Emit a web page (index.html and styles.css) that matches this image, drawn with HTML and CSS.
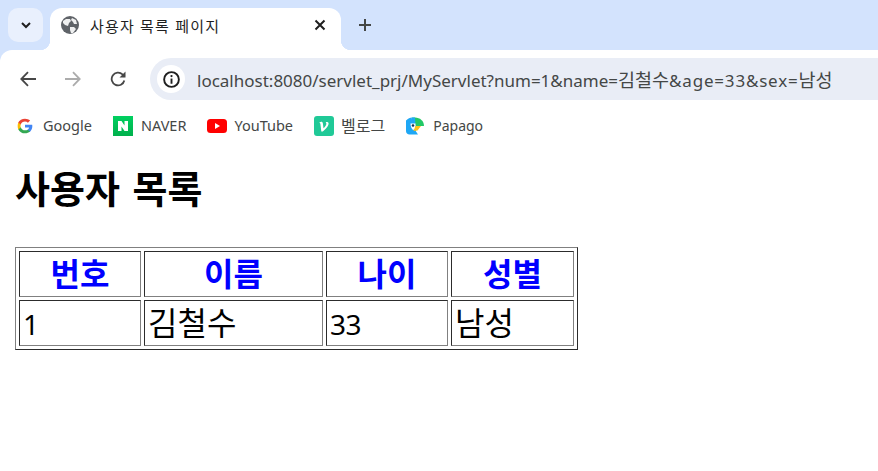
FILE: index.html
```html
<!DOCTYPE html>
<html lang="ko">
	<head>
		<meta charset="utf-8">
		<title>사용자 목록 페이지</title>
		<link rel="stylesheet" href="styles.css">
	</head>
	<body>
		<div class="chrome">
			<!-- browser tab strip -->
			<div class="tabstrip">
				<div class="tabsearch">
					<svg width="12" height="12" viewBox="0 0 12 12"><path d="M2 4l4 4 4-4" fill="none" stroke="#1f1f1f" stroke-width="2"/></svg>
				</div>
				<div class="tab">
					<svg class="globe" width="18" height="18" viewBox="0 0 18 18">
						<circle cx="9" cy="9" r="9" fill="#5f6368"/>
						<path d="M2 5l3-2 4 0 1 2-2 2-1 3-3-1-2-2zM11 2l4 2 1 4-3 0-1-2-2-2zM9 11l4 0 2 2-3 4-2 0-1-3z" fill="#fff" opacity="0.9"/>
					</svg>
					<span class="tabtitle">사용자 목록 페이지</span>
					<svg class="tabclose" width="12" height="12" viewBox="0 0 12 12"><path d="M1.500 1.500l9 9M10.500 1.500l-9 9" stroke="#1f1f1f" stroke-width="2"/></svg>
				</div>
				<svg class="newtab" width="14" height="14" viewBox="0 0 14 14"><path d="M7 1v12M1 7h12" stroke="#444746" stroke-width="2"/></svg>
			</div>

			<!-- toolbar with the address box -->
			<div class="toolbar">
				<svg class="navicon" width="16" height="16" viewBox="0 0 16 16"><path d="M16 8H1.500M8 1.200L1.300 8 8 14.800" fill="none" stroke="#474747" stroke-width="1.800"/></svg>
				<svg class="navicon" width="16" height="16" viewBox="0 0 16 16"><path d="M0 8h14.500M8 1.200L14.700 8 8 14.800" fill="none" stroke="#acacac" stroke-width="1.800"/></svg>
				<svg class="navicon" width="16" height="16" viewBox="0 0 16 16"><path d="M14.300 9.500A6.400 6.400 0 1 1 12.500 3.400L14.600 5.500" fill="none" stroke="#474747" stroke-width="1.800"/><path d="M15.500 .5v6h-6z" fill="#474747"/></svg>
				<div class="omnibox">
					<div class="infobadge">
						<svg width="17" height="17" viewBox="0 0 18 18"><circle cx="9" cy="9" r="7.800" fill="none" stroke="#1f1f1f" stroke-width="2"/><path d="M9 8v5.500" stroke="#1f1f1f" stroke-width="2"/><circle cx="9" cy="5.400" r="1.200" fill="#1f1f1f"/></svg>
					</div>
					<span class="url">localhost:8080/servlet_prj/MyServlet?num=1&amp;name=<span class="ko">김철수</span><span class="urlwide">&amp;age=33&amp;sex=</span><span class="ko">남성</span></span>
				</div>
			</div>

			<!-- bookmarks -->
			<div class="bookmarks">
				<div class="bookmark">
					<svg class="googleicon" width="16" height="16" viewBox="0 0 48 48">
						<path fill="#4285f4" d="M46 24.500c0-1.600-.1-3.100-.4-4.500H24v8.700h12.300c-.5 2.800-2.100 5.200-4.500 6.800v5.600h7.300C43.400 36.700 46 31.100 46 24.500z"/>
						<path fill="#34a853" d="M24 46c6.100 0 11.300-2 15.100-5.500l-7.300-5.600c-2 1.400-4.600 2.200-7.800 2.200-6 0-11-4-12.800-9.500H3.700v5.800C7.400 40.900 15.100 46 24 46z"/>
						<path fill="#fbbc05" d="M11.200 28.600c-.5-1.400-.7-2.900-.7-4.600s.3-3.200.7-4.600v-5.800H3.700C2.600 16.700 2 20.300 2 24s.6 7.300 1.700 10.400z"/>
						<path fill="#ea4335" d="M24 10.800c3.400 0 6.400 1.200 8.800 3.400l6.500-6.500C35.300 4.100 30.100 2 24 2 15.100 2 7.400 7.100 3.700 13.600l7.500 5.800C13 14.800 18 10.800 24 10.800z"/>
					</svg>
					<span>Google</span>
				</div>
				<div class="bookmark">
					<svg class="navericon" width="20" height="20" viewBox="0 0 20 20">
						<defs><linearGradient id="nv" x1="0" y1="0" x2="0" y2="1"><stop offset="0" stop-color="#00d060"/><stop offset="1" stop-color="#00b04c"/></linearGradient></defs>
						<rect width="20" height="20" fill="url(#nv)"/>
						<path d="M5 5h3.500l3 4.500V5H15v10h-3.500l-3-4.500V15H5z" fill="#fff"/>
					</svg>
					<span>NAVER</span>
				</div>
				<div class="bookmark">
					<svg width="20" height="14" viewBox="0 0 20 14"><rect width="20" height="14" rx="3.500" fill="#ff0000"/><path d="M8 4l5 3-5 3z" fill="#fff"/></svg>
					<span>YouTube</span>
				</div>
				<div class="bookmark">
					<svg width="20" height="20" viewBox="0 0 20 20"><rect width="20" height="20" rx="3" fill="#20c997"/><path d="M5.500 6.500c1.700-1.200 3.200-.9 3.400 1l.6 4.800c1.500-1.500 2.900-3.200 2.900-4.600 0-.6-.4-.9-.7-1.200.9-.8 2.900-.5 2.900 1.100 0 2.700-3.300 6-5.900 7.900H7.300L6.400 8c-.1-.7-.4-1-.9-.9z" fill="#fff"/></svg>
					<span class="ko">벨로그</span>
				</div>
				<div class="bookmark">
					<svg class="papagoicon" width="18" height="18" viewBox="0 0 18 18">
						<path d="M6 .5h3C14 .5 18 4 18 9H9.500z" fill="#22c866"/>
						<path d="M0 3.500C2 1.500 4 .5 6 .5c-1 3-1 5 0 8L9 13l3 4.500H3.500C1.500 17.500 0 16 0 14z" fill="#1ea7f5"/>
						<path d="M6 .5c1 0 2 0 3 0L9.500 9 14 9 9.500 14H7c-2-1-3-3-3-6 0-3 .8-6 2-7.500z" fill="#1ea7f5"/>
						<path d="M4.500 6.500h5V12l-2.500 1c-1.500-1.500-2.500-3.500-2.500-6.500z" fill="#fff"/>
						<path d="M9.500 9H15l-3.500 4.500L7.500 14z" fill="#ffc21a"/>
						<circle cx="7" cy="8.500" r="1.300" fill="#16324f"/>
					</svg>
					<span class="papagotext">Papago</span>
				</div>
			</div>
		</div>

		<div class="page">
			<h1>사용자 목록</h1>
			<table border="1">
				<tr>
					<th class="col-num">번호</th>
					<th class="col-name">이름</th>
					<th class="col-age">나이</th>
					<th class="col-sex">성별</th>
				</tr>
				<tr>
					<td class="num">1</td>
					<td>김철수</td>
					<td class="num">33</td>
					<td>남성</td>
				</tr>
			</table>
		</div>
	</body>
</html>
```
FILE: styles.css
```css
body{
	margin: 0;
	overflow: hidden;
	background-color: white;
	font-family: "Noto Sans", "Noto Sans CJK KR", sans-serif;
}
.chrome{
	background-color: #d3e3fd;
}

/* tab strip */
.tabstrip{
	display: flex;
	align-items: flex-start;
	height: 50px;
	padding-top: 8px;
	box-sizing: border-box;
}
.tabsearch{
	display: flex;
	align-items: center;
	justify-content: center;
	width: 35px;
	height: 34px;
	margin-left: 8px;
	border-radius: 10px;
	background-color: #e9f0fd;
}
.tab{
	position: relative;
	display: flex;
	align-items: center;
	width: 291px;
	height: 42px;
	margin-left: 7px;
	padding: 0 15px 8px 11px;
	box-sizing: border-box;
	border-radius: 12px 12px 0 0;
	background-color: white;
}
/* the two flares at the foot of the tab */
.tab::before, .tab::after{
	content: "";
	position: absolute;
	bottom: 0;
	width: 10px;
	height: 10px;
}
.tab::before{
	left: -10px;
	background: radial-gradient(circle at 0 0, transparent 10px, white 10.500px);
}
.tab::after{
	right: -10px;
	background: radial-gradient(circle at 100% 0, transparent 10px, white 10.500px);
}
.tabtitle{
	flex: 1;
	margin-left: 11px;
	font-size: 15px;
	color: #1f1f1f;
	letter-spacing: 1.200px;
}
.newtab{
	margin: 10px 0 0 17px;
}

/* toolbar */
.toolbar{
	display: flex;
	align-items: center;
	height: 58px;
	padding: 8px 0 8px 20px;
	box-sizing: border-box;
	border-radius: 12px 0 0 0;
	background-color: white;
}
.navicon{
	margin-right: 29px;
}
.navicon:nth-child(3){
	margin-right: 24px;
}
.omnibox{
	display: flex;
	align-items: center;
	flex: 1;
	height: 42px;
	padding-left: 7px;
	border-radius: 21px 0 0 21px;
	background-color: #e9edf6;
}
.infobadge{
	display: flex;
	align-items: center;
	justify-content: center;
	width: 28px;
	height: 28px;
	border-radius: 50%;
	background-color: white;
}
.url{
	margin-left: 12px;
	font-size: 17px;
	color: #444746;
	white-space: nowrap;
}
.url .ko{
	font-size: 18.500px;
}
.urlwide{
	letter-spacing: 0.800px;
}

/* bookmarks */
.bookmarks{
	display: flex;
	align-items: center;
	height: 36px;
	padding-left: 17px;
	background-color: white;
}
.bookmark{
	display: flex;
	align-items: center;
	margin-right: 21px;
	font-size: 14.500px;
	color: #444746;
}
.bookmark span{
	margin-left: 7px;
	padding-bottom: 2px;
}
.bookmark .ko{
	font-size: 16px;
}
.bookmark .papagotext{
	margin-left: 6px;
	font-size: 14px;
}
.googleicon, .papagoicon{
	margin-right: 3px;
}
.navericon{
	margin-right: 1px;
}

/* page content */
.page{
	padding: 0 15px;
	font-family: "Liberation Sans", "Noto Sans CJK KR", sans-serif;
}
h1{
	margin: 24px 0 35px;
	font-size: 38px;
	line-height: 44px;
	word-spacing: 2px;
}
table{
	width: 563px;
	table-layout: fixed;
	border-spacing: 3px;
	border-color: #808080;
	font-size: 32px;
}
th, td{
	box-sizing: border-box;
	height: 46px;
	padding: 2px 3px 0;
	line-height: 36px;
}
th{
	color: blue;
}
.col-num, .col-age{
	width: 122px;
}
.col-name{
	width: 179px;
}
.col-sex{
	width: 123px;
}
td.num{
	font-family: "Noto Sans", sans-serif;
	font-size: 28px;
	letter-spacing: -0.500px;
}
```
